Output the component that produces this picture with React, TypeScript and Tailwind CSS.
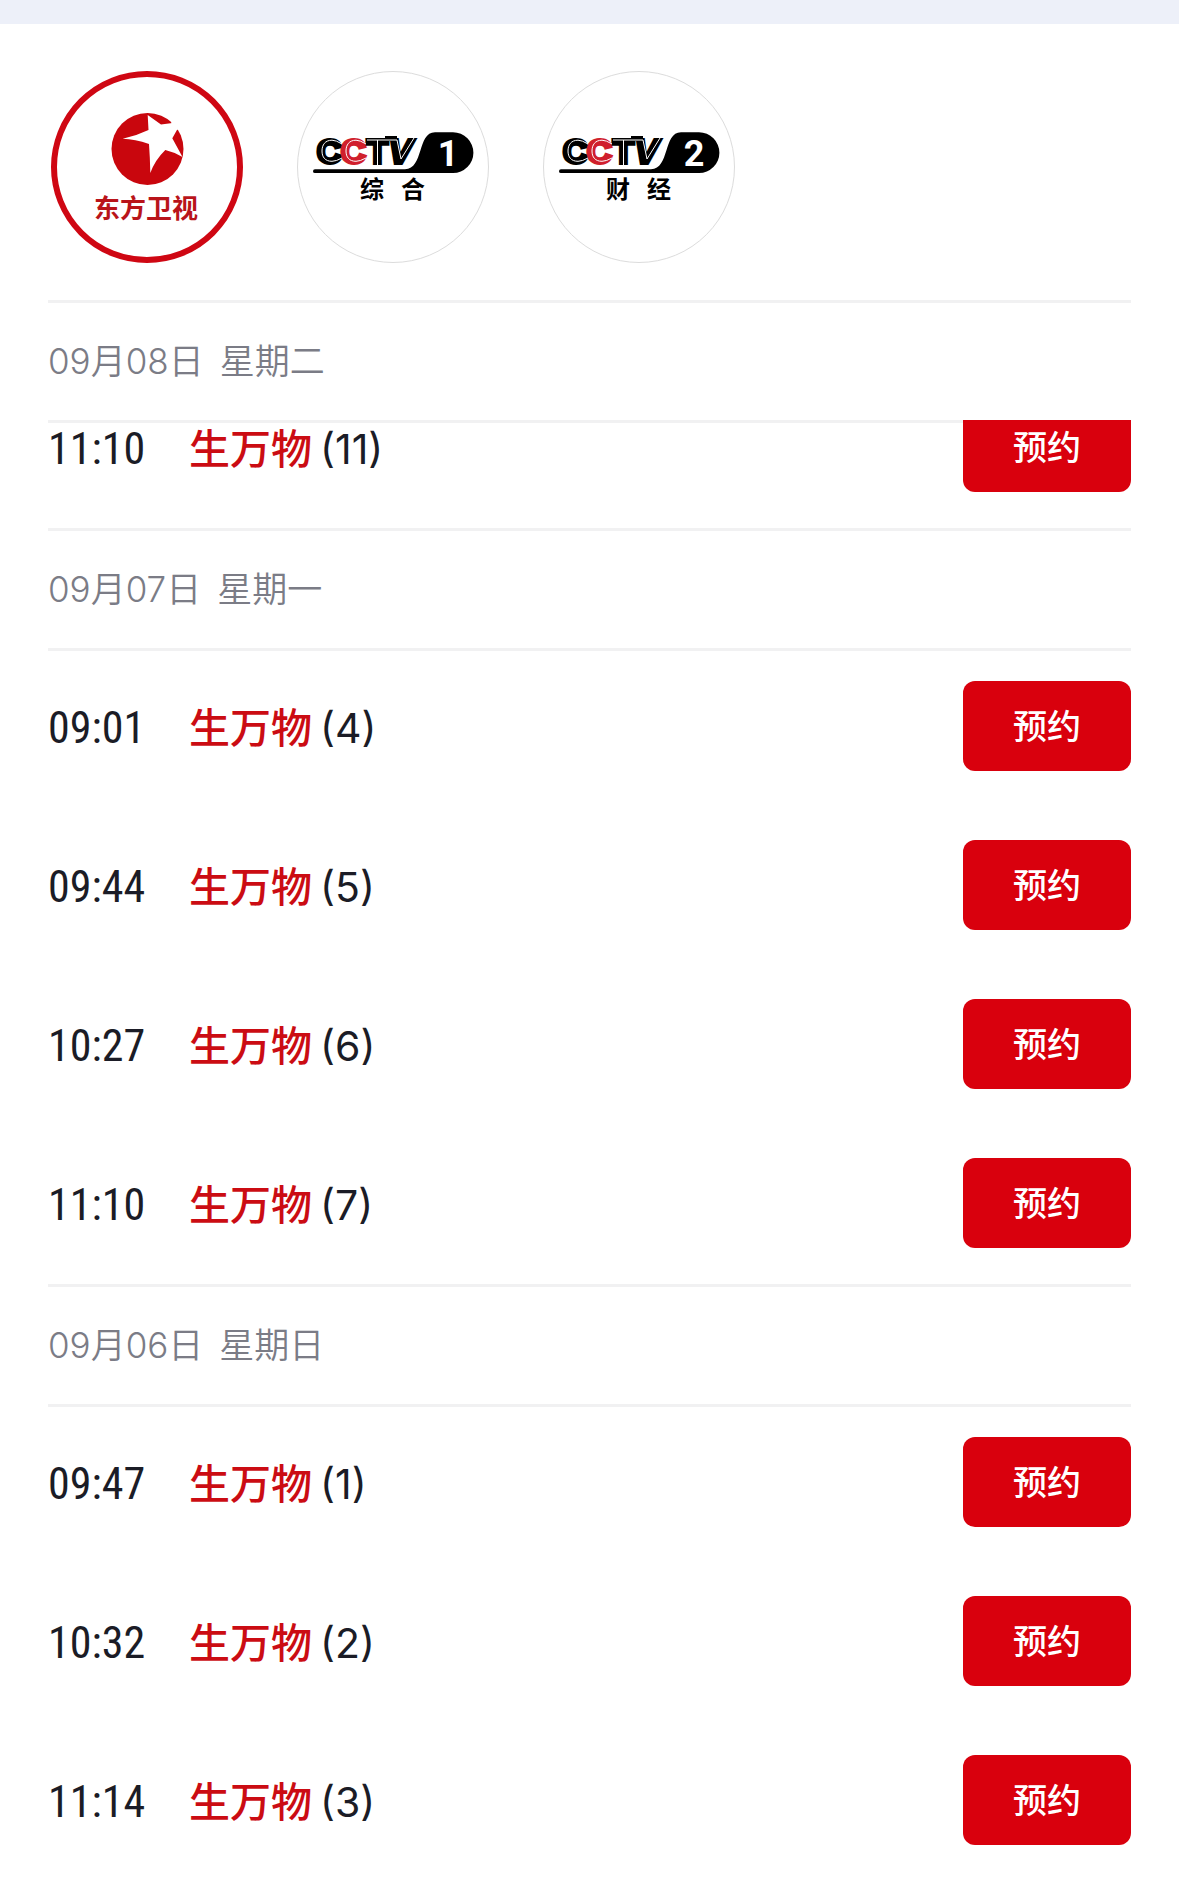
import { useState } from 'react';

const channels = [
  { id: 'dragon', name: '东方卫视' },
  { id: 'cctv1', name: '综合', number: '1' },
  { id: 'cctv2', name: '财经', number: '2' },
];

const days = [
  {
    date: '09月08日',
    weekday: '星期二',
    scrolled: true,
    programs: [{ time: '11:10', title: '生万物', episode: 11 }],
  },
  {
    date: '09月07日',
    weekday: '星期一',
    scrolled: false,
    programs: [
      { time: '09:01', title: '生万物', episode: 4 },
      { time: '09:44', title: '生万物', episode: 5 },
      { time: '10:27', title: '生万物', episode: 6 },
      { time: '11:10', title: '生万物', episode: 7 },
    ],
  },
  {
    date: '09月06日',
    weekday: '星期日',
    scrolled: false,
    programs: [
      { time: '09:47', title: '生万物', episode: 1 },
      { time: '10:32', title: '生万物', episode: 2 },
      { time: '11:14', title: '生万物', episode: 3 },
    ],
  },
];

function DragonLogo() {
  return (
    <svg viewBox="0 0 192 192" className="h-full w-full">
      <circle cx="96.5" cy="78" r="36" fill="#c9060d" />
      <path
        d="M96.7 44 L110 53.5 L121.5 52 L126.5 58 L121.3 67.3 L131.5 86 Q123 81 114.3 79 Q104 89 99.3 102 Q99 86 98 73 Q84 68 71.7 67.7 Q85 65 97.5 59 Z"
        fill="#fff"
      />
      <path d="M120 52 L126 59 L131 56 L123 47 Z" fill="#fff" />
      <text
        x="95"
        y="147"
        textAnchor="middle"
        className="fill-[#b9141a] font-['Noto_Sans_CJK_SC',sans-serif] text-[26px] font-bold"
      >
        东方卫视
      </text>
    </svg>
  );
}

function CctvLogo({ number, name }: { number: string; name: string }) {
  return (
    <svg viewBox="0 0 192 192" className="h-full w-full">
      <g
        className="font-['Liberation_Sans',sans-serif] text-[34px] font-bold"
        fill="#000"
        stroke="#000"
        strokeWidth="4"
      >
        <text x="20" y="92">C</text>
        <text x="44" y="92" fill="#d01f2d" stroke="#d01f2d">C</text>
        <text x="70" y="92">T</text>
        <text x="92" y="92" className="italic">V</text>
      </g>
      <path d="M88 67.500 H100" stroke="#000" strokeWidth="5" />
      {/* inline stripes of the word mark */}
      <g fill="none" stroke="#fff" strokeWidth="1">
        <path d="M45 73 Q39 69.200 35 69.200 C28 69.200 25 74 25 80 C25 86 28 90.300 35 90.300 Q39 90.300 45 87" />
        <path d="M69 73 Q63 69.200 59 69.200 C52 69.200 49 74 49 80 C49 86 52 90.300 59 90.300 Q63 90.300 69 87" />
        <path d="M70 69 H100 L104 88 L117 67 M80.500 69 V94" />
      </g>
      <path
        d="M18 98.300 H108 C127 98 120 61.300 138 61.300 H156 A20.400 20.400 0 0 1 156 102.100 H18 Q16 102 16 100.200 Q16 98.300 18 98.300 Z"
        fill="#000"
      />
      <text x="151" y="95" textAnchor="middle" fill="#fff" className="font-[Roboto,sans-serif] text-[36px] font-bold">
        {number}
      </text>
      <g textAnchor="middle" className="font-['Noto_Sans_CJK_SC',sans-serif] text-[24px] font-bold">
        <text x="75" y="127">{name[0]}</text>
        <text x="116" y="127">{name[1]}</text>
      </g>
    </svg>
  );
}

function ProgramRow({ time, title, episode }: { time: string; title: string; episode: number }) {
  return (
    <li className="flex shrink-0 items-center pt-[33px] pb-9">
      <time className="w-[141px] shrink-0 pt-1 font-['Roboto_Condensed','Liberation_Sans_Narrow',Roboto,sans-serif] text-[44px] leading-none text-[#1b1c26]">
        {time}
      </time>
      <p className="flex-1 pt-1 text-[41px] leading-none text-[#1b1c26]">
        <span className="font-medium text-[#cb0c13]">{title}</span>
        <span className="ml-2">({episode})</span>
      </p>
      <button
        type="button"
        className="h-[90px] w-[168px] shrink-0 rounded-xl bg-[#d9000d] text-[34px] font-medium text-white"
      >
        预约
      </button>
    </li>
  );
}

export default function App() {
  const [active, setActive] = useState('dragon');

  return (
    <div className="min-h-screen bg-white font-[Inter,'Noto_Sans_CJK_SC',sans-serif]">
      <div className="h-6 bg-[#edf0f9]" />

      <nav className="flex gap-[54px] px-[51px] pt-[47px] pb-[37px]">
        {channels.map((channel) => (
          <button
            key={channel.id}
            type="button"
            aria-label={channel.name}
            onClick={() => setActive(channel.id)}
            className={`relative size-48 rounded-full after:absolute after:inset-0 after:rounded-full ${
              active === channel.id
                ? 'after:border-[6px] after:border-[#cf0713]'
                : 'after:border after:border-[#dcdcdc]'
            }`}
          >
            {channel.number ? <CctvLogo number={channel.number} name={channel.name} /> : <DragonLogo />}
          </button>
        ))}
      </nav>

      <main className="px-12">
        {days.map((day) => (
          <section key={day.date}>
            <h2 className="-mb-[3px] flex h-[123px] items-center gap-4 border-y-[3px] border-[#f1f1f2] text-[35px] font-[350] text-[#7b7c86]">
              <span>{day.date}</span>
              <span>{day.weekday}</span>
            </h2>
            <ul
              className={`relative flex flex-col ${day.scrolled ? 'h-[108px] justify-end overflow-hidden' : ''}`}
            >
              {day.programs.map((program) => (
                <ProgramRow key={program.time} {...program} />
              ))}
            </ul>
          </section>
        ))}
      </main>
    </div>
  );
}
